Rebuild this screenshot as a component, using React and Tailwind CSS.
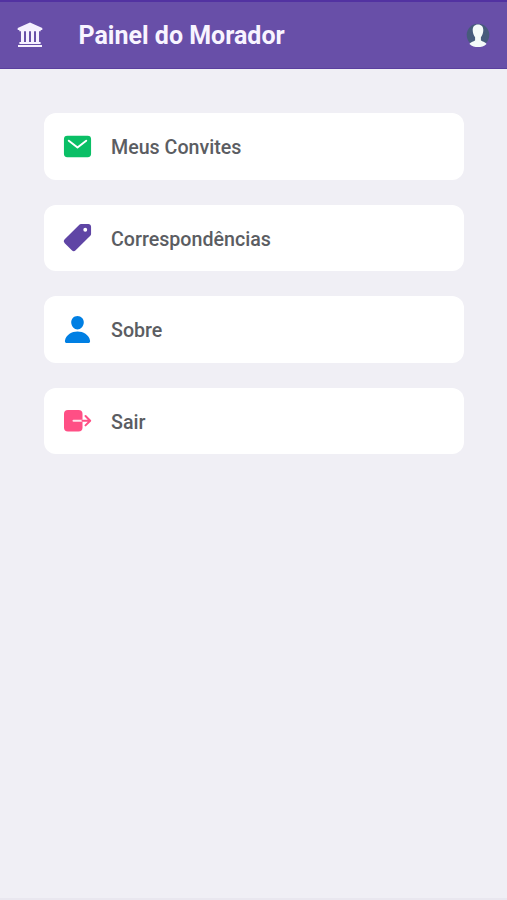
import { IoMail, IoPricetag, IoPerson } from 'react-icons/io5';

const menuItems = [
    { label: 'Meus Convites', icon: IoMail, color: 'text-[#0abf66]' },
    { label: 'Correspondências', icon: IoPricetag, color: 'text-[#5f45a5]' },
    { label: 'Sobre', icon: IoPerson, color: 'text-[#007fe3]' },
    { label: 'Sair', icon: ExitIcon, color: 'text-[#ff4f85]' },
];

function ExitIcon({ className }) {
    return (
        <svg viewBox="0 0 31 31" className={className} fill="none" strokeWidth="2" strokeLinecap="round" strokeLinejoin="round">
            <rect x="2" y="5" width="18.5" height="21.5" rx="4" fill="currentColor" />
            <path d="M11.5 15.7 H20.5" stroke="#ffe3ec" />
            <path d="M20.5 15.7 H28 M23.5 11 L28.2 15.7 L23.5 20.4" stroke="currentColor" />
        </svg>
    );
}

function BuildingIcon() {
    return (
        <svg viewBox="0 0 26 26" className="h-[26px] w-[26px] fill-[#f6f1ff]">
            <path d="M13 0.5 L25.3 6 V8 H23.7 V9.3 H2.3 V8 H0.7 V6 Z" />
            <path d="M4 9 H7 V20 H9 V9 H12 V20 H14 V9 H17 V20 H19 V9 H22 V20 H23.6 V22 H2.4 V20 H4 Z" />
            <path d="M1 23 H25 V25 H1 Z" />
        </svg>
    );
}

function Avatar() {
    return (
        <svg viewBox="0 0 24 24" className="h-6 w-6">
            <circle cx="12" cy="12" r="11.3" fill="#465b7b" />
            <path
                d="M12 1.4 C8.5 1.4 6.7 3.6 6.7 7 C6.7 9.8 7.7 12.4 9.1 14.2 V17.3 C8.3 18.7 4.5 18.9 3.5 20.9 C5.7 23.2 9 24 12 24 C15 24 18.3 23.2 20.5 20.9 C19.5 18.9 15.7 18.7 14.9 17.3 V14.2 C16.3 12.4 17.3 9.8 17.3 7 C17.3 3.6 15.5 1.4 12 1.4 Z"
                fill="#f4faf9"
            />
        </svg>
    );
}

export default function App() {
    return (
        <div className="flex h-screen flex-col border-b-2 border-[#e9e7ef] bg-[#f0eff5] font-[Roboto,sans-serif]">
            {/* Header */}
            <header className="flex h-[69px] shrink-0 items-center border-t-2 border-b border-t-[#5232a1] border-b-[#5a3f9e] bg-[#684fa8] pr-[17px] pl-[17px]">
                <BuildingIcon />
                <h1 className="ml-[35.5px] flex-1 pt-0.5 text-[25px] leading-7 font-bold text-[#f8f4ff]">Painel do Morador</h1>
                <Avatar />
            </header>

            {/* Menu */}
            <nav className="flex flex-col gap-[25px] px-[43.5px] pt-11">
                {menuItems.map((item) => {
                    const Icon = item.icon;
                    return (
                        <a
                            key={item.label}
                            href="#"
                            className="flex h-[66.5px] items-center gap-[18.5px] rounded-xl bg-white pl-[18px]"
                        >
                            <Icon className={`h-[31px] w-[31px] ${item.color}`} />
                            <span className="pt-[3.5px] text-[19.65px] leading-6 font-medium text-[#5b5d62]">{item.label}</span>
                        </a>
                    );
                })}
            </nav>
        </div>
    );
}
